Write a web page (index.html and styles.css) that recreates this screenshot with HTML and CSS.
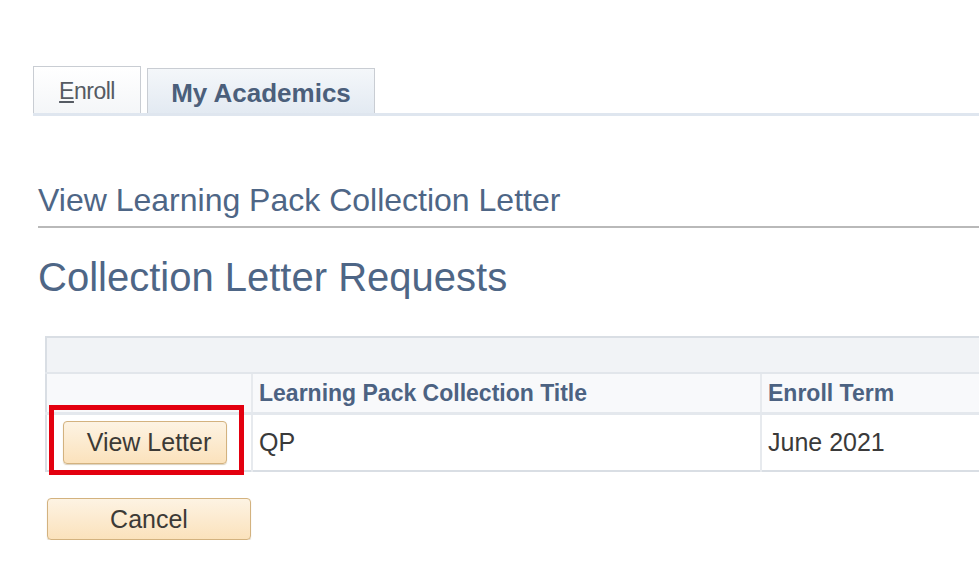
FILE: index.html
```html
<!DOCTYPE html>
<html lang="en">
<head>
  <meta charset="UTF-8">
  <title>View Learning Pack Collection Letter</title>
  <link rel="stylesheet" href="styles.css">
</head>
<body>

  <div class="tabs">
    <a class="tab" href="#"><u>E</u>nroll</a>
    <a class="tab active" href="#">My Academics</a>
  </div>

  <div class="page">
    <h1 class="page-title">View Learning Pack Collection Letter</h1>
    <h2 class="section-title">Collection Letter Requests</h2>

    <table class="grid">
      <tr class="grid-band">
        <td colspan="3"></td>
      </tr>
      <tr class="grid-head">
        <th class="col-action"></th>
        <th class="col-title">Learning Pack Collection Title</th>
        <th class="col-term">Enroll Term</th>
      </tr>
      <tr class="grid-row">
        <td class="col-action">
          <span class="highlight"></span>
          <button class="btn btn-view">View Letter</button>
        </td>
        <td>QP</td>
        <td>June 2021</td>
      </tr>
    </table>

    <button class="btn btn-cancel">Cancel</button>
  </div>

</body>
</html>
```

FILE: styles.css
```css
:root {
  --heading: #4e6686;
  --label: #4c6282;
  --text: #3a3a3a;
  --grid-line: #d9dee4;
  --band: #f1f3f6;
}

body {
  margin: 0;
  font-family: "Liberation Sans", Arial, sans-serif;
  background: #ffffff;
  color: var(--text);
  overflow: hidden;
}

.tabs {
  display: flex;
  align-items: flex-end;
  margin: 66px 0 0 33px;
  border-bottom: 3px solid #dfe6ef;
  height: 47px;
}

.tab {
  box-sizing: border-box;
  display: flex;
  align-items: center;
  justify-content: center;
  text-decoration: none;
  border: 1px solid #c9cdd3;
  border-bottom: none;
}

.tab:first-child {
  width: 108px;
  height: 47px;
  font-size: 23px;
  color: #555b63;
  background: linear-gradient(#ffffff, #f4f6f8);
  letter-spacing: -0.5px;
  padding-top: 3px;
}

.tab.active {
  margin-left: 6px;
  width: 228px;
  height: 45px;
  font-size: 26px;
  font-weight: bold;
  color: #4b5f7b;
  background: linear-gradient(#f4f7fa, #e3eaf2);
  padding-top: 4px;
}

.page {
  padding-left: 38px;
}

.page-title {
  margin: 64px 0 0;
  font-size: 32px;
  font-weight: normal;
  color: var(--heading);
  line-height: 40px;
  padding-bottom: 6px;
  border-bottom: 2px solid #b9b9b9;
}

.section-title {
  margin: 26px 0 0;
  font-size: 40px;
  font-weight: normal;
  color: var(--heading);
  line-height: 46px;
}

.grid {
  margin: 36px 0 0 7px;
  width: 934px;
  border-collapse: collapse;
  border: 2px solid var(--grid-line);
  border-right: none;
}

.grid td,
.grid th {
  padding: 0;
  text-align: left;
}

.grid-band td {
  height: 34px;
  background: var(--band);
  border-bottom: 2px solid #e2e6eb;
}

.grid-head th {
  height: 38px;
  background: #f8f9fb;
  font-size: 23px;
  font-weight: bold;
  color: var(--label);
  padding-left: 6px;
  border-bottom: 3px solid #e4e8ed;
}

.grid-head th.col-action {
  padding: 0;
  width: 204px;
}

.grid-head th.col-term {
  width: 211px;
  border-left: 2px solid #e7eaee;
}

.grid-head th.col-title {
  border-left: 2px solid #e7eaee;
}

.grid-row td {
  height: 55px;
  font-size: 25px;
  color: var(--text);
  padding-left: 6px;
  border-left: 2px solid #e7eaee;
}

.grid-row td.col-action {
  position: relative;
  padding-left: 16px;
  border-left: none;
}

.highlight {
  position: absolute;
  left: 2px;
  top: -10px;
  width: 195px;
  height: 70px;
  box-sizing: border-box;
  border: 5px solid #e3000f;
}

.btn {
  box-sizing: border-box;
  font-family: "Liberation Sans", Arial, sans-serif;
  font-size: 25px;
  color: #3c3a36;
  background: linear-gradient(#fdf3e3, #fbe2bc);
  border: 1px solid #d3b27f;
  border-radius: 4px;
  box-shadow: 0 1px 1px rgba(150, 120, 70, 0.35);
  cursor: pointer;
}

.btn-view {
  display: block;
  width: 164px;
  height: 43px;
  padding: 0 0 0 8px;
}

.btn-cancel {
  display: block;
  margin: 26px 0 0 9px;
  width: 204px;
  height: 42px;
}
```
